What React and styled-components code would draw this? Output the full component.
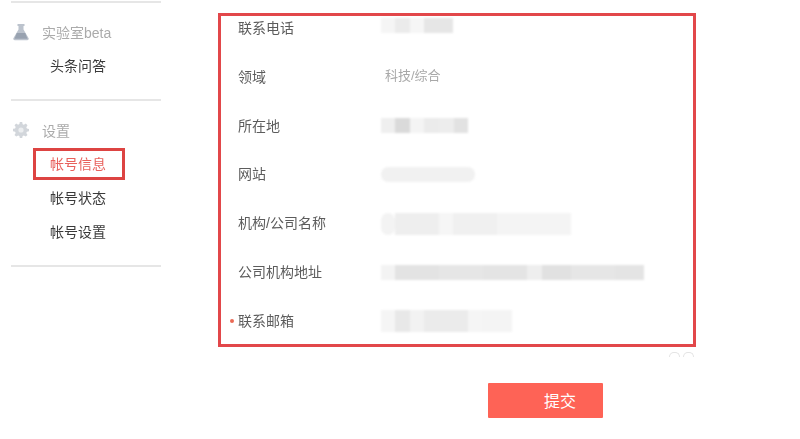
import styled, { createGlobalStyle } from "styled-components";

const GlobalStyle = createGlobalStyle`
  html, body {
    margin: 0;
    padding: 0;
    background: #fff;
  }
  body {
    font-family: "Liberation Sans", "Noto Sans CJK SC", sans-serif;
    overflow: hidden;
  }
`;

const Page = styled.div`
  width: 800px;
  height: 439px;
  display: flex;
  align-items: flex-start;
  overflow: hidden;
`;

const Sidebar = styled.aside`
  width: 150px;
  margin-left: 11px;
  padding-top: 1px;
`;

const Group = styled.section`
  height: 98px;
  padding-top: 14px;
  box-sizing: border-box;
  border-top: 2px solid #e6e6e6;
  &:nth-child(2) {
    height: 166px;
  }
  &:last-child {
    height: 2px;
    padding: 0;
  }
`;

const GroupTitle = styled.div`
  display: flex;
  align-items: center;
  height: 30px;
  padding-left: 2px;
  gap: 13px;
  font-size: 14px;
  color: #ababab;
  margin-bottom: 3px;
  filter: blur(0.3px);
`;

const Item = styled.div`
  position: relative;
  height: 34px;
  line-height: 32px;
  padding-left: 39px;
  font-size: 14px;
  color: ${(p) => (p.$active ? "#e8615c" : "#3a3a3a")};

  ${(p) =>
    p.$active &&
    `&::after {
      content: "";
      position: absolute;
      left: 22px;
      top: 0;
      width: 92px;
      height: 32px;
      box-sizing: border-box;
      border: 3px solid #dd4442;
    }`}
`;

const ItemText = styled.span`
  display: inline-block;
  filter: blur(0.3px);
`;

const Main = styled.main`
  margin-left: 57px;
  padding-top: 13px;
  width: 478px;
`;

const FormBox = styled.div`
  width: 478px;
  height: 334px;
  box-sizing: border-box;
  border: 3px solid #e2474a;
  display: flex;
  flex-direction: column;
  gap: 24.83px;
`;

const Row = styled.div`
  position: relative;
  display: flex;
  align-items: center;
  height: 24px;
  flex: none;
  padding-left: 17px;
  font-size: 14px;
  color: #5c5c5c;
`;

const Label = styled.span`
  width: 143px;
  flex: none;
  margin-top: -2px;
  filter: blur(0.3px);
`;

const RequiredDot = styled.span`
  position: absolute;
  left: 9px;
  top: 10px;
  width: 4px;
  height: 4px;
  border-radius: 50%;
  background: #ea6a55;
`;

const PlainValue = styled.span`
  margin-left: 4px;
  margin-top: -5px;
  font-size: 13px;
  color: #a8a8a8;
  filter: blur(0.3px);
`;

const Smudge = styled.div`
  display: flex;
  height: ${(p) => p.$h}px;
  margin-top: ${(p) => p.$top || 0}px;
  filter: blur(1px);
`;

const Patch = styled.i`
  display: block;
  width: ${(p) => p.$w}px;
  height: 100%;
  background: ${(p) => p.$c};
  border-radius: ${(p) => p.$r || 0}px;
`;

const Footnote = styled.div`
  display: flex;
  justify-content: flex-end;
  gap: 3px;
  height: 5px;
  padding: 5px 2px 0 0;
`;

const Arc = styled.i`
  display: block;
  width: 9px;
  height: 4px;
  border: 1px solid #e4e4e4;
  border-bottom: 0;
  border-radius: 6px 6px 0 0;
`;

const SubmitButton = styled.button`
  display: block;
  width: 115px;
  height: 35px;
  margin: 26px 0 0 270px;
  padding: 0 0 2px 29px;
  border: 0;
  border-radius: 1px;
  background: #fe6356;
  color: #fff;
  font-family: inherit;
  font-size: 16px;
`;

const FlaskIcon = () => (
  <svg width="16" height="18" viewBox="0 0 16 18">
    <path d="M4.500 1h7v2h-1v3.500l5 8.500c.6 1.100 0 2.200-1.200 2.200H1.700C.5 17.200-.1 16.100.5 15l5-8.500V3h-1z" fill="#bcc3cd" />
    <path d="M3.800 10h8.400l2.300 5.800H1.500z" fill="#98a2b0" />
  </svg>
);

const GearIcon = () => (
  <svg width="16" height="16" viewBox="0 0 16 16">
    <path
      d="M6.800 0h2.400l.4 2.200 1.300.6 1.900-1.200 1.700 1.700-1.200 1.900.6 1.300 2.100.4v2.400l-2.100.4-.6 1.300 1.200 1.900-1.700 1.700-1.900-1.200-1.300.6-.4 2.100H6.800l-.4-2.100-1.300-.6-1.900 1.200-1.700-1.700 1.200-1.900-.6-1.300L0 9.200V6.800l2.100-.4.6-1.300-1.200-1.900 1.700-1.700 1.900 1.200 1.300-.6z"
      fill="#d2d6db"
    />
    <circle cx="8" cy="8" r="2.600" fill="#eceef0" />
  </svg>
);

// the values are blurred out in the screenshot, so they are just grey patches
const rows = [
  { label: "联系电话", h: 15, top: -5, patches: [[14, "#f5f5f5"], [15, "#ebebeb"], [14, "#f6f6f6"], [29, "#e6e6e6"]] },
  { label: "领域", text: "科技/综合" },
  { label: "所在地", h: 15, top: -1, patches: [[14, "#efefef"], [15, "#dadada"], [14, "#f4f4f4"], [15, "#ebebeb"], [15, "#ededed"], [14, "#e2e2e2"]] },
  { label: "网站", h: 15, patches: [[94, "#f1f1f1", 7]] },
  { label: "机构/公司名称", h: 22, top: 2, patches: [[14, "#f3f3f3", 8], [44, "#eeeeee"], [14, "#f6f6f6"], [44, "#f0f0f0"], [74, "#f4f4f4"]] },
  { label: "公司机构地址", h: 15, patches: [[14, "#f3f3f3"], [44, "#e3e3e3"], [44, "#e6e6e6"], [44, "#e4e4e4"], [15, "#eeeeee"], [29, "#e1e1e1"], [44, "#e6e6e6"], [29, "#e4e4e4"]] },
  { label: "联系邮箱", required: true, h: 22, patches: [[14, "#f5f5f5"], [15, "#e8e8e8"], [14, "#f2f2f2"], [44, "#ebebeb"], [14, "#f5f5f5"], [30, "#f4f4f4"]] },
];

export default function App() {
  return (
    <>
      <GlobalStyle />
      <Page>
        <Sidebar>
          <Group>
            <GroupTitle>
              <FlaskIcon />
              实验室beta
            </GroupTitle>
            <Item>
              <ItemText>头条问答</ItemText>
            </Item>
          </Group>
          <Group>
            <GroupTitle>
              <GearIcon />
              设置
            </GroupTitle>
            <Item $active>
              <ItemText>帐号信息</ItemText>
            </Item>
            <Item>
              <ItemText>帐号状态</ItemText>
            </Item>
            <Item>
              <ItemText>帐号设置</ItemText>
            </Item>
          </Group>
          <Group />
        </Sidebar>
        <Main>
          <FormBox>
            {rows.map((row) => (
              <Row key={row.label}>
                {row.required && <RequiredDot />}
                <Label>{row.label}</Label>
                {row.text ? (
                  <PlainValue>{row.text}</PlainValue>
                ) : (
                  <Smudge $h={row.h} $top={row.top}>
                    {row.patches.map(([w, c, r], i) => (
                      <Patch key={i} $w={w} $c={c} $r={r} />
                    ))}
                  </Smudge>
                )}
              </Row>
            ))}
          </FormBox>
          <Footnote>
            <Arc />
            <Arc />
          </Footnote>
          <SubmitButton>提交</SubmitButton>
        </Main>
      </Page>
    </>
  );
}
